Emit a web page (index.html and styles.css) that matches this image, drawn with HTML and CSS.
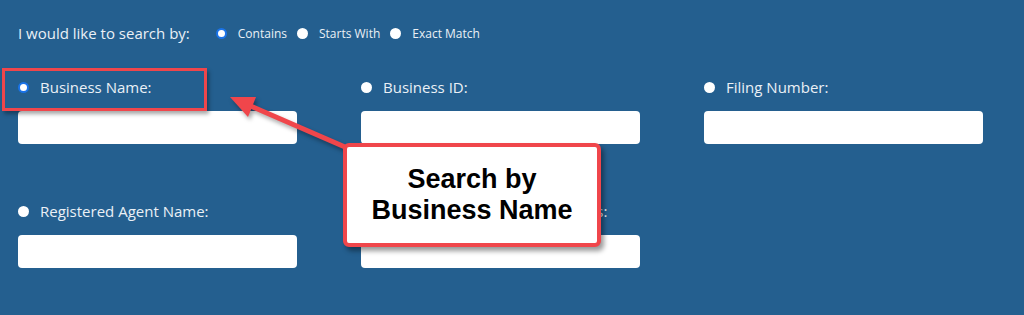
FILE: index.html
```html
<!DOCTYPE html>
<html lang="en">
<head>
    <meta charset="UTF-8">
    <title>Business Search</title>
    <link rel="stylesheet" href="styles.css">
</head>
<body>

<div class="search-panel">
    <div class="match-row">
        <span class="match-title">I would like to search by:</span>
        <label class="option"><span class="radio checked"></span>Contains</label>
        <label class="option"><span class="radio"></span>Starts With</label>
        <label class="option"><span class="radio"></span>Exact Match</label>
    </div>

    <div class="field-grid">
        <div class="field">
            <label class="field-label"><span class="radio checked"></span>Business Name:</label>
            <input type="text" class="field-input">
        </div>
        <div class="field">
            <label class="field-label"><span class="radio"></span>Business ID:</label>
            <input type="text" class="field-input">
        </div>
        <div class="field">
            <label class="field-label"><span class="radio"></span>Filing Number:</label>
            <input type="text" class="field-input">
        </div>
        <div class="field">
            <label class="field-label"><span class="radio"></span>Registered Agent Name:</label>
            <input type="text" class="field-input">
        </div>
        <div class="field">
            <label class="field-label"><span class="radio"></span>Principal Office Mailing Address:</label>
            <input type="text" class="field-input">
        </div>
    </div>
</div>

<!-- annotation layer -->
<div class="highlight-box"></div>
<svg class="pointer" width="1024" height="315" viewBox="0 0 1024 315">
    <line x1="345" y1="147" x2="246" y2="104" stroke="#f0464b" stroke-width="5"/>
    <polygon points="230,97 256,97 248,117" fill="#f0464b"/>
</svg>
<div class="callout">Search by<br>Business Name</div>

</body>
</html>
```

FILE: styles.css
```css
* {
    margin: 0;
    padding: 0;
    box-sizing: border-box;
}
body {
    font-family: 'Open Sans', sans-serif;
    background-color: #245f8f;
    color: #eaf0f6;
    width: 1024px;
    height: 315px;
    overflow: hidden;
    position: relative;
}
.search-panel {
    padding: 22px 0 0 18px;
}
.match-row {
    display: flex;
    align-items: center;
    height: 22px;
}
.match-title {
    font-size: 15px;
    margin-right: 26px;
}
.option {
    display: flex;
    align-items: center;
    font-size: 12px;
    margin-right: 10px;
}
.option .radio {
    margin-right: 11px;
}
.radio {
    display: inline-block;
    width: 11px;
    height: 11px;
    border-radius: 50%;
    background-color: #fff;
    flex-shrink: 0;
}
.radio.checked {
    border: 2px solid #1a73e8;
}
.field-grid {
    display: grid;
    grid-template-columns: repeat(3, 279px);
    column-gap: 64px;
    row-gap: 56px;
    margin-top: 32px;
}
.field {
    display: flex;
    flex-direction: column;
}
.field-label {
    display: flex;
    align-items: center;
    font-size: 15px;
    height: 22px;
    margin-bottom: 13px;
    white-space: nowrap;
}
.field-label .radio {
    margin-right: 11px;
}
.field-input {
    height: 33px;
    border: none;
    border-radius: 4px;
    background-color: #fff;
}
.highlight-box {
    position: absolute;
    left: 2px;
    top: 68px;
    width: 205px;
    height: 43px;
    border: 3px solid #f0464b;
    box-shadow: 2px 3px 4px rgba(0, 0, 0, 0.35);
}
.pointer {
    position: absolute;
    left: 0;
    top: 0;
    filter: drop-shadow(2px 3px 2px rgba(0, 0, 0, 0.35));
}
.callout {
    position: absolute;
    left: 343px;
    top: 143px;
    width: 258px;
    height: 104px;
    background-color: #fff;
    border: 4px solid #f0464b;
    border-radius: 6px;
    box-shadow: 3px 4px 5px rgba(0, 0, 0, 0.4);
    font-family: 'Liberation Sans', Arial, sans-serif;
    font-weight: bold;
    font-size: 27px;
    line-height: 31px;
    color: #000;
    text-align: center;
    padding-top: 17px;
}
```
